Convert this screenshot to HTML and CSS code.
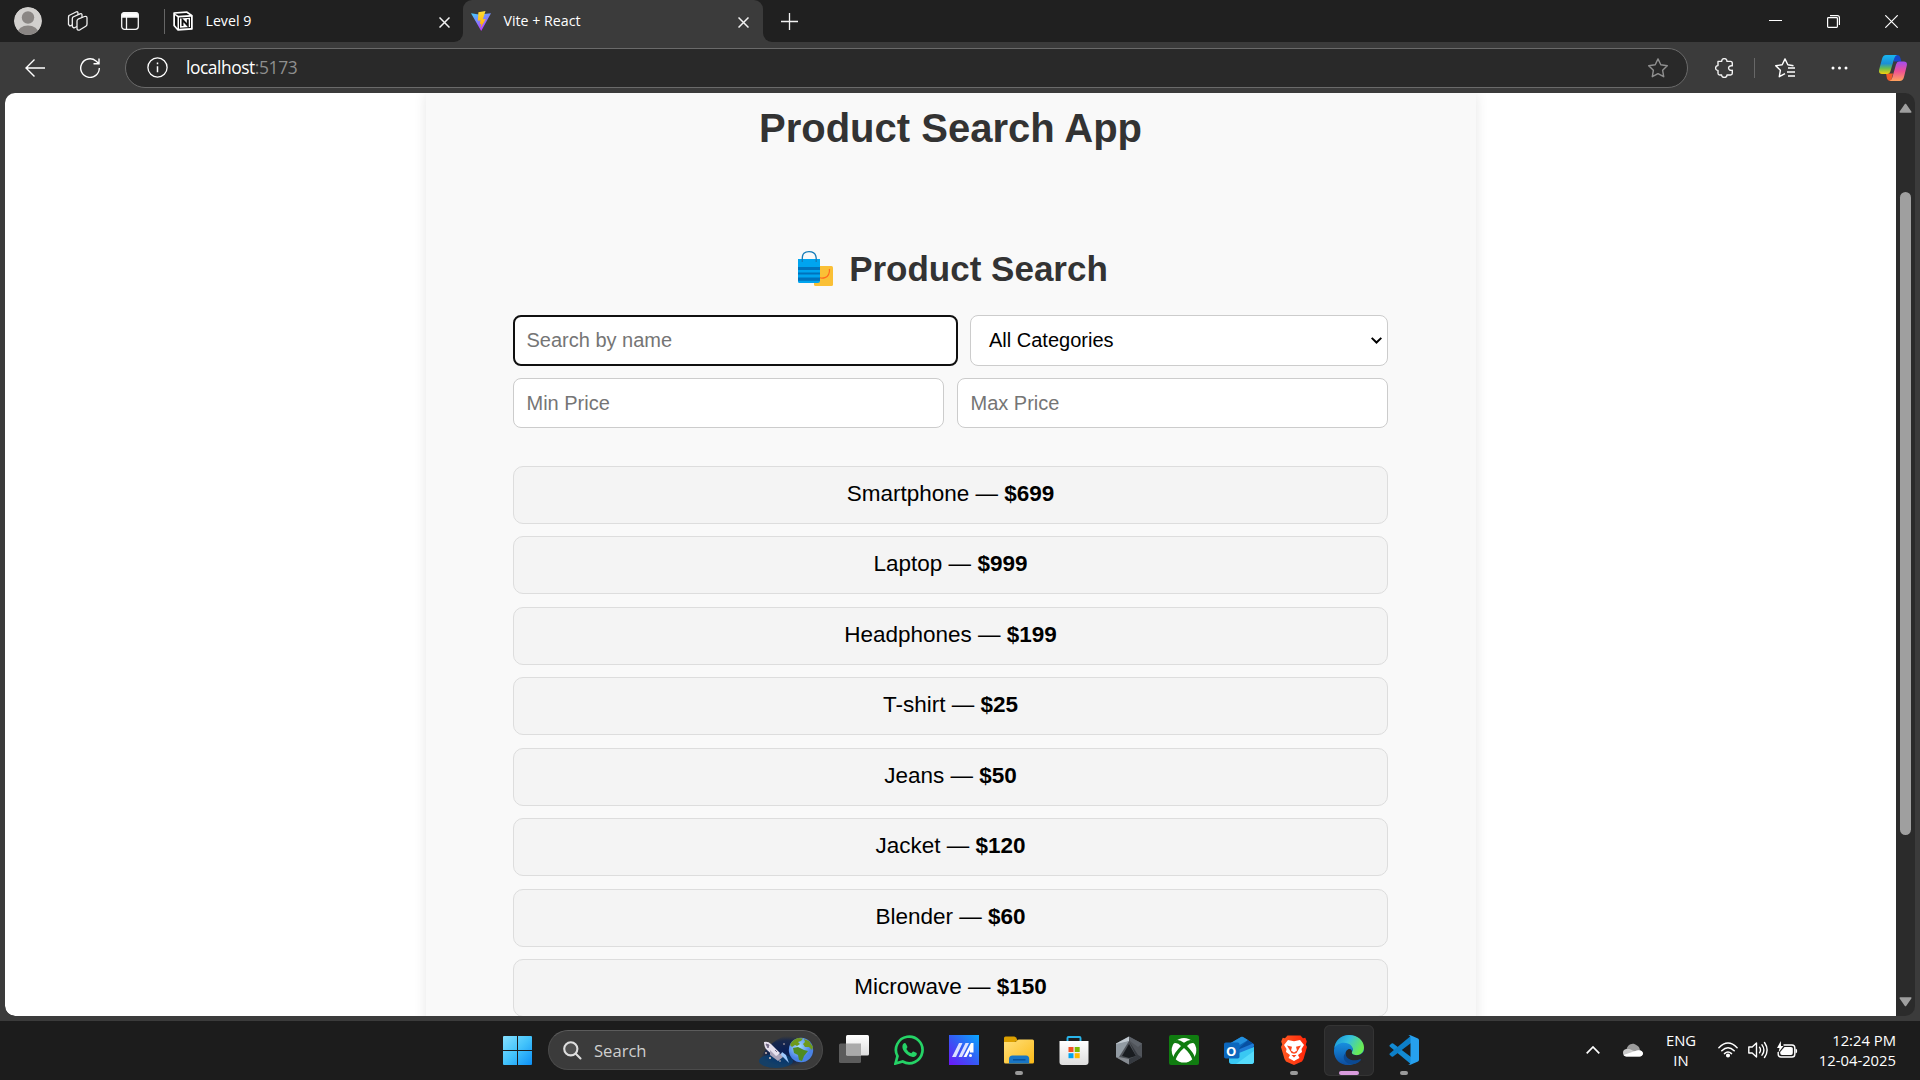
FILE: index.html
```html
<!DOCTYPE html>
<html lang="en">
<head>
<meta charset="utf-8">
<title>Vite + React</title>
<link rel="stylesheet" href="styles.css">
</head>
<body>
<div class="screen">
  <header class="tabstrip">
    <div class="strip-left">
      <svg class="avatar" width="28" height="28" viewBox="0 0 28 28"><defs><clipPath id="face"><circle cx="14" cy="14" r="14"/></clipPath></defs><g clip-path="url(#face)"><circle cx="14" cy="14" r="14" fill="#d2d0ce"/><circle cx="14" cy="10.5" r="6.2" fill="#8a8684"/><ellipse cx="14" cy="26" rx="10.5" ry="7.5" fill="#8a8684"/></g></svg>
      <svg class="workspaces" width="22" height="22" viewBox="0 0 22 22" fill="#202020" stroke="#f0f0f0" stroke-width="1.3" stroke-linejoin="round"><path d="M3 5.500l7-3.500q2-.8 2 1.200v9L4 16l-1.500-1.500v-7q0-1.300.500-2z"/><path d="M7 7l7-3.200q2-.8 2 1.200v9l-8 4-1.700-1.300V9q0-1.300.7-2z"/><path d="M12 9.200l6.500-2.700q2.500-.8 2.500 1.500v6q0 1.500-1.200 2.200L14 19.800q-3 1.200-3-1.500v-7q0-1.500 1-2.100z"/></svg>
      <svg class="tabmenu" width="18" height="18" viewBox="0 0 18 18" fill="none" stroke="#f5f5f5" stroke-width="1.300"><rect x=".7" y=".7" width="16.600" height="16.600" rx="2.800"/><path d="M5.500 5v12"/><path d="M1 3q0-2 2-2h12q2 0 2 2v2H1z" fill="#fff"/></svg>
      <span class="strip-sep"></span>
      <svg class="notion" width="20" height="20" viewBox="0 0 20 20"><path d="M1 2l13-1 5 3.500V18l-14 1-4-4.500z" fill="#fff" stroke="#fff" stroke-width="1.500" stroke-linejoin="round"/><path d="M2 2.800l11.500-.8 3 2-11 .8zM2 4.200l2.500 2v11L2 14.300zM6 6.400l12-.7v11.200l-12 .9z" fill="#111"/><path d="M7 7.400l10-.6v9.200l-10 .7z" fill="#fff"/><path d="M9.500 15V8.800l5.300 5.700V8.200" fill="none" stroke="#111" stroke-width="1.900"/></svg>
      <span class="tab-title">Level 9</span>
      <svg class="close" width="11" height="11" viewBox="0 0 11 11" stroke="#f2f2f2" stroke-width="1.500"><path d="M.5.5l10 10M10.500.5l-10 10"/></svg>
    </div>
    <div class="tab-cell"><div class="tab-active">
      <svg class="vite" width="20" height="20" viewBox="0 0 20 20"><defs><linearGradient id="va" x1="0" y1="0" x2=".5" y2="1"><stop stop-color="#41d1ff"/><stop offset="1" stop-color="#bd34fe"/></linearGradient><linearGradient id="vb" x1="0" y1="0" x2="0" y2="1"><stop stop-color="#ffdd35"/><stop offset="1" stop-color="#ffa800"/></linearGradient></defs><path d="M0 2.200l8 1.200L20 2.200 10.200 20z" fill="url(#va)"/><path d="M14.500 0L7.400 1.300 6.900 9.700l2.700-.5-.8 4 1.700-.4-1 4.400 5.200-9.300-2.800.4z" fill="url(#vb)"/></svg>
      <span class="tab-title">Vite + React</span>
      <svg class="close" width="11" height="11" viewBox="0 0 11 11" stroke="#f2f2f2" stroke-width="1.500"><path d="M.5.5l10 10M10.500.5l-10 10"/></svg>
    </div></div>
    <div class="strip-right">
      <svg class="plus" width="17" height="17" viewBox="0 0 17 17" stroke="#f2f2f2" stroke-width="1.300"><path d="M8.500 0v17M0 8.500h17"/></svg>
      <svg class="wmin" width="13" height="13" viewBox="0 0 13 13"><path d="M0 5.500h13" stroke="#fff"/></svg>
      <svg class="wmax" width="13" height="13" viewBox="0 0 13 13" fill="none" stroke="#fff" stroke-width="1.200"><rect x=".6" y="2.600" width="9.800" height="9.800" rx=".8"/><path d="M3 .6h7.400q2 0 2 2V10"/></svg>
      <svg width="13" height="13" viewBox="0 0 13 13" stroke="#fff" stroke-width="1.200"><path d="M.3.3l12.400 12.400M12.700.3L.3 12.700"/></svg>
    </div>
  </header>

  <nav class="toolbar">
    <svg class="back" width="20" height="18" viewBox="0 0 20 18" fill="none" stroke="#fff" stroke-width="1.400"><path d="M20 9H1M9.500.5L1 9l8.500 8.500"/></svg>
    <svg class="reload" width="20" height="20" viewBox="0 0 20 20" fill="none" stroke="#fff" stroke-width="1.400"><path d="M19.300 10A9.300 9.300 0 1 1 16 3l2.800 2.600M19 .5v5.300h-5.500"/></svg>
    <div class="address">
      <svg class="info" width="21" height="21" viewBox="0 0 21 21" fill="none" stroke="#fff" stroke-width="1.300"><circle cx="10.500" cy="10.500" r="9.600"/><path d="M10.500 9.300v6M10.500 5.600v1.700" stroke-width="1.500"/></svg>
      <span class="host">localhost</span><span class="port">:5173</span>
      <svg class="star" width="20" height="20" viewBox="0 0 20 20" fill="none" stroke="#8f8f8f" stroke-width="1.400" stroke-linejoin="round"><path d="M10 .9l2.800 5.900 6.500.9-4.700 4.500 1.100 6.500L10 15.600l-5.700 3.100 1.100-6.500L.7 7.700l6.500-.9z"/></svg>
    </div>
    <svg class="puzzle" width="19" height="20" viewBox="0 0 19 20" fill="none" stroke="#f2f2f2" stroke-width="1.400" stroke-linejoin="round"><path d="M3 3.400h3.600C6.600-.3 12-.3 12 3.400h3.500q1.800 0 1.800 1.800v2.700c-5-.8-5 5.200 0 4.400v3q0 1.700-1.800 1.700H12c0 3.300-5.400 3.300-5.400 0H4.800Q3 17 3 15.300v-2.900c-3.200 0-3.200-4.800 0-4.800z"/></svg>
    <span class="tool-sep"></span>
    <svg class="favs" width="20" height="20" viewBox="0 0 20 20" fill="none" stroke="#fff" stroke-width="1.400" stroke-linejoin="round"><path d="M18.500 7.700l-5.700-.9L10 .9 7.200 6.800.7 7.700l4.700 4.500-1.100 6.500L10 15.600"/><path d="M13 12.500h7M12 16.500h8M13 20.500h7" stroke-width="1.300" transform="translate(0 -2.500)"/></svg>
    <svg class="dots" width="17" height="4" viewBox="0 0 17 4" fill="#fff"><circle cx="2" cy="2" r="1.500"/><circle cx="8.500" cy="2" r="1.500"/><circle cx="15" cy="2" r="1.500"/></svg>
    <svg class="copilot" width="28" height="26" viewBox="0 0 28 26"><defs><linearGradient id="ca" x1="0" y1="0" x2="0" y2="1"><stop stop-color="#18b6f0"/><stop offset=".45" stop-color="#1b8fd6"/><stop offset=".7" stop-color="#67bd52"/><stop offset="1" stop-color="#f5d10c"/></linearGradient><linearGradient id="cb" x1="0" y1="0" x2="0" y2="1"><stop stop-color="#a14df0"/><stop offset=".5" stop-color="#ee5095"/><stop offset="1" stop-color="#ffa35c"/></linearGradient></defs><path d="M14 0h4q2.600 0 3.400 3l1 3.500H15z" fill="#1746c9"/><path d="M7 18.500h7L12 26h-1q-2.400 0-3-2.400z" fill="#f25a2b"/><path d="M7 0h11q-2 .5-2.800 3.500L11.500 16q-.8 3-3.500 3H3q-4 0-2.700-5L3 4Q4 0 7 0z" fill="url(#ca)"/><path d="M20 6.500h4.800q4 0 2.900 4.500L25 22q-1 4-4.300 4H10.500q2-.6 2.800-3.500L17 9.500q.8-3 3-3z" fill="url(#cb)"/></svg>
  </nav>

  <div class="viewport">
    <main class="page">
      <section class="card">
        <h1>Product Search App</h1>
        <div class="search">
          <h2><svg class="bags" width="35" height="35" viewBox="0 0 35 35"><rect x="16" y="15" width="19" height="20" rx="1.500" fill="#fac036"/><path d="M31.500 18c.5 11-9 9-10 8.500" fill="none" stroke="#ff6a1f" stroke-width="1.200"/><path d="M0 8h22v22q0 2-2 2H1.500Q0 32 0 30.500z" fill="#00a4ef"/><path d="M0 16h22v3H0zM0 21.500h22v2H0zM0 26.500h22v3.300H0z" fill="#0072bc"/><path d="M4.300 11V7q0-6.300 6.700-6.300T18.200 7v4" fill="none" stroke="#157cb9" stroke-width="1.300"/></svg><span>Product Search</span></h2>
          <div class="row">
            <input class="name" type="text" placeholder="Search by name">
            <div class="select" role="combobox"><span>All Categories</span><svg width="11" height="7" viewBox="0 0 11 7" fill="none" stroke="#000" stroke-width="2"><path d="M.7.900l4.800 4.600L10.300.9"/></svg></div>
          </div>
          <div class="row prices">
            <input type="text" placeholder="Min Price">
            <input type="text" placeholder="Max Price">
          </div>
          <ul class="list">
            <li>Smartphone — <strong>$699</strong></li>
            <li>Laptop — <strong>$999</strong></li>
            <li>Headphones — <strong>$199</strong></li>
            <li>T-shirt — <strong>$25</strong></li>
            <li>Jeans — <strong>$50</strong></li>
            <li>Jacket — <strong>$120</strong></li>
            <li>Blender — <strong>$60</strong></li>
            <li>Microwave — <strong>$150</strong></li>
          </ul>
        </div>
      </section>
    </main>
    <div class="scrollbar">
      <svg width="13" height="10" viewBox="0 0 13 10"><path d="M6.500 1.500L11.700 9H1.300z" fill="#9f9f9f" stroke="#9f9f9f" stroke-width="1.600" stroke-linejoin="round"/></svg>
      <span class="thumb"></span>
      <svg class="down" width="13" height="10" viewBox="0 0 13 10"><path d="M6.500 8.500L11.700 1H1.300z" fill="#9f9f9f" stroke="#9f9f9f" stroke-width="1.600" stroke-linejoin="round"/></svg>
    </div>
  </div>

  <footer class="taskbar">
    <svg class="start" width="29" height="29" viewBox="0 0 29 29"><defs><linearGradient id="wa" x1="0" y1="0" x2="1" y2="1"><stop stop-color="#86e0ff"/><stop offset=".5" stop-color="#43c3fb"/><stop offset="1" stop-color="#0c8ff5"/></linearGradient></defs><path d="M1 0h13v14H0V1q0-1 1-1zM15 0h13q1 0 1 1v13H15zM0 15h14v14H1q-1 0-1-1zM15 15h14v13q0 1-1 1H15z" fill="url(#wa)"/></svg>
    <div class="tsearch">
      <svg class="mag" width="19" height="19" viewBox="0 0 19 19" fill="#505050" stroke="#dedede" stroke-width="2.100" stroke-linecap="round"><circle cx="7.800" cy="7.800" r="6.600"/><path d="M12.800 12.800l4.700 4.700"/></svg>
      <span>Search</span>
      <svg class="space" width="60" height="38" viewBox="0 0 60 38"><defs><radialGradient id="sk"><stop stop-color="#071c55"/><stop offset=".7" stop-color="#102350" stop-opacity=".8"/><stop offset="1" stop-color="#152850" stop-opacity="0"/></radialGradient><radialGradient id="ea" cx=".4" cy=".35"><stop stop-color="#a4dbff"/><stop offset="1" stop-color="#4a83e4"/></radialGradient></defs><path d="M0 36Q4 15 26 5h31v22q-3 8-13 9z" fill="url(#sk)"/><ellipse cx="18" cy="30" rx="17" ry="7" fill="#064179" opacity=".7"/><path d="M6 11q4-1 7 2l9 9-4 5-9-8q-3-3-3-8z" fill="#e7e1ee"/><path d="M12 19l6 6 6-3 1 4-5 4-8-6z" fill="#aaa2b8"/><path d="M23 24l8 8-3-8-4-3z" fill="#9cc8fc"/><path d="M8 13l3 1-1 3zM17 19l2 2" fill="#746b86" stroke="#746b86"/><g fill="#ddc5be"><circle cx="8" cy="22" r=".9"/><circle cx="12" cy="27" r="1"/><circle cx="26" cy="13" r=".8"/><circle cx="22" cy="30" r=".8"/></g><circle cx="43" cy="19" r="12.200" fill="url(#ea)"/><path d="M32 14q2-5 8-7l5 .5-2 2.500-3 1 2 2-3 2-2-1-3 2z" fill="#6f9a1c"/><path d="M46 8l5 2 4 6-1 3-3-3-4 0-2-3 2-2z" fill="#6f9a1c"/><path d="M35 17l5-1 6 3 4 1-4 5-2 5-3-1-1-5-4-2z" fill="#4f8b22"/></svg>
    </div>
    <div class="apps">
      <span class="app"><svg viewBox="0 0 30 30"><defs><linearGradient id="tv" x1="0" y1="0" x2="0" y2="1"><stop stop-color="#fff"/><stop offset="1" stop-color="#ddd"/></linearGradient></defs><rect x="0" y="8.500" width="22" height="19.500" rx="1.500" fill="#5c5c5c"/><rect x="7" y="0" width="23" height="20.500" rx="1.500" fill="url(#tv)"/><path d="M7 8.500h15v12H8.500Q7 20.500 7 19z" fill="#aaa"/></svg></span>
      <span class="app"><svg viewBox="0 0 30 30"><path d="M1.500 28.500l2-7.300A13.300 13.300 0 1 1 8.700 26.500z" fill="none" stroke="#25d366" stroke-width="2.700"/><path d="M10 8.200q1-.6 1.800.2l1.600 3.300q.2 1-1.100 2.300 1.700 3.200 5 4.300l1.600-1.800q.8-.5 3.800 1.500.5 2.500-2.200 3.700-3.500 1.200-8-2.700T8.400 11Q8.700 9 10 8.200z" fill="#25d366"/></svg></span>
      <span class="app"><svg viewBox="0 0 30 30"><defs><linearGradient id="ms" x1="0" y1="1" x2="1" y2="0"><stop stop-color="#6d16f8"/><stop offset=".5" stop-color="#345bf4"/><stop offset="1" stop-color="#09a8fe"/></linearGradient></defs><path d="M0 0h30v30H0z" fill="url(#ms)"/><path d="M3 22L10 8h3.500L7 22zM9.500 22l7-14H20l-7 14z" fill="#dbe1ff"/><path d="M14.500 22L22 8h2.500v9.500H21V15l-3.500 7z" fill="#fff"/><circle cx="21.500" cy="20.500" r="1.500" fill="#fff"/></svg></span>
      <span class="app"><svg viewBox="0 0 30 30"><defs><linearGradient id="ex" x1="0" y1="0" x2="1" y2="1"><stop stop-color="#ffe07b"/><stop offset="1" stop-color="#fcba17"/></linearGradient></defs><path d="M0 10V3q0-1.500 1.500-1.500H10q1 0 2 1l2 3.500z" fill="#dca000"/><path d="M0 7h11.500l3-2.500h14q1.500 0 1.500 1.500v21q0 1.500-1.500 1.500h-27Q0 28.500 0 27z" fill="url(#ex)"/><path d="M5 28.500V24q0-3.500 3.500-3.500H22q3.200 0 3.200 3.500v4.500z" fill="#1976c5"/><path d="M9 24.800h12.500" stroke="#064e99" stroke-width="1.400"/></svg><i class="dot"></i></span>
      <span class="app"><svg viewBox="0 0 30 30"><defs><linearGradient id="st" x1="0" y1="0" x2="0" y2="1"><stop stop-color="#fff"/><stop offset="1" stop-color="#dedede"/></linearGradient></defs><path d="M8.500 8V3q0-1 1-1h11q1 0 1 1v5" fill="none" stroke="#29b4e9" stroke-width="1.900"/><path d="M.5 6h29v21q0 3-3 3h-23q-3 0-3-3z" fill="url(#st)"/><path d="M9.500 12h5v5h-5z" fill="#f25022"/><path d="M15.700 12h5v5h-5z" fill="#7fba00"/><path d="M9.500 18.200h5v5h-5z" fill="#00a4ef"/><path d="M15.700 18.200h5v5h-5z" fill="#ffb900"/></svg></span>
      <span class="app"><svg viewBox="0 0 30 30"><path d="M15 1.500l13 7v13.700l-13 7.300-13-7.300V8.500z" fill="#50545a"/><path d="M15 1.500l-13 7v4L15 6z" fill="#c1c9d0"/><path d="M15 1.500l13 7L24 12l-8-6z" fill="#5d6269"/><path d="M15 6L5 22l-3 .2V9z" fill="#929ba3"/><path d="M15 9l7 12-7 2-7-2z" fill="#191c20"/><path d="M5 22l10 2v5.500L2 22.200z" fill="#868b91"/><path d="M15 6l9 14 4 2.200L15 29.500V24l7-3z" fill="#363a40"/></svg></span>
      <span class="app"><svg viewBox="0 0 30 30"><rect width="30" height="30" rx="2" fill="#107c10"/><circle cx="15" cy="15.200" r="12.300" fill="#fff"/><path d="M7 5.300Q10 4 15 7.700 20 4 23 5.300L26.500 9Q22 6.500 18 11q7 7 8 12l-2.500 2Q21 18 15 13 9 18 6.500 25L4 23q1-5 8-12Q8 6.500 3.500 9z" fill="#107c10"/></svg></span>
      <span class="app outlook"><svg viewBox="0 0 30 30"><path d="M5 9L17 2q1-.4 2 0l10 6.500q1 .6 1 2V26q0 3-3 3H8q-3 0-3-3z" fill="#0c65b9"/><path d="M5 9L17 2q1-.4 2 0l5 3L9 14z" fill="#2391df"/><path d="M24 5l5 3.500L15 21l-5-3z" fill="#0750a2"/><path d="M29 8.500q1 .8 1 2L19 21l-8-5z" fill="#1e7bd6"/><path d="M5 21l10-3 15-6v14q0 3-3 3H8q-3 0-3-3z" fill="#39c8f3"/><path d="M12 29l18-13v10q0 3-3 3z" fill="#55dbfb"/><rect y="7.500" width="15.500" height="16" rx="1.800" fill="#0c67bd"/></svg><b class="oletter">O</b></span>
      <span class="app"><svg viewBox="0 0 30 30"><defs><linearGradient id="br"><stop stop-color="#ff5a22"/><stop offset="1" stop-color="#ff2408"/></linearGradient></defs><path d="M8.500.5h13L24 3.200l2.300-.4 1.500 3.700-1 3L28 12l-3.500 12-1.500 2.400L15 30l-8-3.600L5.500 24 2 12l1.200-2.500-1-3L3.700 2.800 6 3.200z" fill="url(#br)"/><path d="M9 5l6 1.300L21 5l4 5-2.500 4 .5 3-4 3 1.500 3L15 26l-5.500-3 1.500-3-4-3 .5-3L5 10z" fill="#fff"/><path d="M8 10.500l5 1.200-1 3.800 3 2 3-2-1-3.800 5-1.200-3 5-1.500 2.500-2.500.8-2.500-.8L11 15.500zM12.500 20h5L15 22.500z" fill="#fa451c"/></svg><i class="dot"></i></span>
      <span class="app current"><svg viewBox="0 0 30 30"><defs><linearGradient id="ed" x1="0" y1="0" x2="1" y2=".4"><stop stop-color="#168fd5"/><stop offset=".5" stop-color="#35c1df"/><stop offset="1" stop-color="#69eb55"/></linearGradient><linearGradient id="ee" x1="0" y1="0" x2="0" y2="1"><stop stop-color="#178fe0"/><stop offset="1" stop-color="#0d4d9f"/></linearGradient></defs><circle cx="15" cy="15" r="14.900" fill="#0e65b5"/><path d="M.3 13C1.500 5 7.500 0 15 0c9 0 15 6 15 12.500 0 5-3.500 7.700-7.500 7.700-4.200 0-5.200-2-4.500-3.200 1-1.500 1.200-3 .3-4.500C15 7 5 7 .3 13z" fill="url(#ed)"/><path d="M0 15C2 8 9 6.500 14 8.500c4 1.700 5.200 5 4 8-1.500-3-5-3-6.500.8C9 23.500 16 28 22 26.800 13 34-.5 28 0 15z" fill="url(#ee)"/><path d="M18 16.800c-.8 1.500.5 3.400 4.500 3.400 3 0 4.800-1 7.500-4v10l-2 1-1.500-2.600c-5 3-15 1.500-15-5.300 0-3 2-5.300 4-5.300 1.500 0 2.500 1.300 2.500 2.800z" fill="#29292a"/><path d="M11.500 18c0 7 9 9 15 6l.5 1c-5 6-13 5-16 1-2-3-1.500-6 .5-8z" fill="#0b4992"/></svg><i class="dot active"></i></span>
      <span class="app"><svg viewBox="0 0 30 30"><path d="M.6 10.200l2-1.800q.8-.5 1.600 0L22 22v7.200L1 11.800q-1-.8-.4-1.600z" fill="#138bd4"/><path d="M.6 19.800l2 1.800q.8.5 1.600 0L22 8V.8L1 18.200q-1 .8-.4 1.600z" fill="#0d7fc8"/><path d="M21.500.3L29 3.500q1 .5 1 1.700v19.500q0 1.200-1 1.700l-7.500 3.400q-1.500.3-2.300-.8 2.300.8 2.300-1.700V2.500q0-2-2.300-1.600.8-1 2.300-.6z" fill="#26a0ee"/></svg><i class="dot"></i></span>
    </div>
    <svg class="chev" width="14" height="8" viewBox="0 0 14 8" fill="none" stroke="#fff" stroke-width="1.700"><path d="M.7 7.300L7 1l6.300 6.300"/></svg>
    <svg class="cloud" width="20" height="14" viewBox="0 0 20 14"><path d="M3.500 7C4 2.500 9-1.500 14 2.500q2.500 1 3 5L5 11z" fill="#9b9b9b"/><path d="M3 6.500q3.500-1.600 6.500 1l9 3-1 1-14 .5z" fill="#d2d2d2"/><path d="M3.500 13.500Q0 13 0 9.800T3.200 6q1.800-.3 3.500 1.200l3.500 2L14 7.500q5-1 6 2.800-.2 3-3.500 3.200z" fill="#c9c9c9"/><path d="M3 13.500q-1.800-.3-2.500-1.600L10 8.700l4-1.300q5-.8 6 2.900-.2 3-3.500 3.200z" fill="#fff"/></svg>
    <div class="lang"><span>ENG</span><span>IN</span></div>
    <svg class="wifi" width="20" height="16" viewBox="0 0 20 16" fill="none" stroke="#fff" stroke-width="1.500" stroke-linecap="round"><path d="M.9 5.800Q10-3.600 19.100 5.800M3.800 8.800q6.200-6 12.400 0M6.500 11.600q3.500-3.300 7 0"/><circle cx="10" cy="13.500" r="1.300" fill="#fff"/></svg>
    <svg class="sound" width="20" height="18" viewBox="0 0 20 18" fill="none" stroke="#fff" stroke-width="1.400" stroke-linecap="round" stroke-linejoin="round"><path d="M.8 6h3.400l4.300-4v14l-4.300-4H.8zM11.500 6.200q2 2.800 0 5.600M14 3.800q3.800 5.200 0 10.400M16.500 1.500q5.200 7.500 0 15"/></svg>
    <svg class="battery" width="21" height="18" viewBox="0 0 21 18"><path d="M6.500 4H15q2.800 0 2.800 2.800v6.400q0 2.800-2.800 2.800H4q-2.800 0-2.800-2.800V11" fill="none" stroke="#fff" stroke-width="1.400"/><path d="M7.500 6H14q1.800 0 1.800 1.500V12q0 2-1.800 2H5q-1.800 0-1.800-2v-1z" fill="#fff"/><path d="M18.500 7.500q1.700.2 1.700 2.500t-1.700 2.500z" fill="#fff"/><path d="M3.800 0L0 7h2.500L1.500 11.500 6.500 5H4z" fill="#fff"/></svg>
    <div class="clock"><span>12:24 PM</span><span>12-04-2025</span></div>
  </footer>
</div>
</body>
</html>
```
FILE: styles.css
```css
* { box-sizing: border-box; }
body { margin: 0; background: #3b3b3b; }
svg { display: block; flex: none; }

.screen {
  width: 1920px;
  height: 1080px;
  display: flex;
  flex-direction: column;
  overflow: hidden;
  background: #3b3b3b;
  font-family: "Open Sans", "Noto Sans", sans-serif;
  color: #fff;
}

/* Tab strip */
.tabstrip { height: 42px; display: flex; }
.strip-left {
  width: 463px;
  background: #202020;
  border-bottom-right-radius: 9px;
  display: flex;
  align-items: center;
  padding: 0 13px 0 14px;
}
.workspaces { margin-left: 24px; }
.tabmenu { margin-left: 33px; }
.strip-sep { width: 1px; height: 25px; margin-left: 25px; background: #666; }
.notion { margin-left: 8px; }
.tab-title { font-size: 14.2px; line-height: 20px; margin-left: 12.5px; letter-spacing: 0; white-space: nowrap; }
.close { margin: 2px 0 0 auto; }
.tab-cell { width: 300px; background: linear-gradient(#202020 50%, #3b3b3b 50%); }
.tab-active {
  height: 42px;
  background: #3b3b3b;
  border-radius: 9px 9px 0 0;
  display: flex;
  align-items: center;
  padding: 0 14px 0 8px;
}
.strip-right {
  flex: 1;
  background: #202020;
  border-bottom-left-radius: 9px;
  display: flex;
  align-items: center;
  padding: 0 22px 0 18px;
}
.wmin { margin-left: auto; }
.wmax { margin: 0 45px; }

/* Toolbar */
.toolbar { height: 51px; display: flex; align-items: center; padding: 0 13px 0 25px; }
.reload { margin-left: 35px; }
.address {
  width: 1563px;
  height: 40px;
  margin-left: 25px;
  border: 1px solid #6a6a6a;
  border-radius: 20px;
  background: #292929;
  display: flex;
  align-items: center;
  padding: 0 19px 0 21px;
  font-size: 17.4px;
  line-height: 24px;
}
.host, .port { padding-bottom: 1px; }
.host { margin-left: 18px; letter-spacing: -0.45px; }
.port { color: #8e8e8e; letter-spacing: -0.35px; }
.star { margin-left: auto; }
.puzzle { margin-left: 27px; }
.tool-sep { width: 1px; height: 20px; background: #676767; margin-left: 20px; }
.favs { margin-left: 20px; }
.dots { margin-left: 36px; }
.copilot { margin-left: auto; }

/* Web page area */
.viewport {
  width: 1910px;
  height: 923px;
  margin-left: 5px;
  display: flex;
  border-radius: 10px;
  overflow: hidden;
  background: #2b2b2b;
}
.page {
  width: 1891px;
  background: #fff;
  display: flex;
  justify-content: center;
  overflow: hidden;
  font-family: "Liberation Sans", Arial, sans-serif;
  border-bottom-left-radius: 10px;
}
.card {
  width: 1050px;
  height: 1200px;
  background: #f9f9f9;
  box-shadow: 0 0 12px rgba(0, 0, 0, 0.1);
  color: #333;
}
h1 { margin: 12px 0 0; font-size: 40px; line-height: 46px; text-align: center; }
.search { width: 875px; margin: 98px auto 0; }
h2 {
  margin: 0;
  height: 40px;
  display: flex;
  justify-content: center;
  align-items: center;
  font-size: 35px;
  line-height: 40px;
}
.bags { margin: -2px 16px 0 5px; }
.row { display: flex; gap: 12px; margin-top: 26px; height: 51px; }
.prices { margin-top: 12px; height: 50px; gap: 13px; }
input, .select {
  flex: 1;
  min-width: 0;
  border: 1px solid #ccc;
  border-radius: 8px;
  background: #fff;
  padding: 0 12.5px;
  font: 20px "Liberation Sans", Arial, sans-serif;
}
input::placeholder { color: #757575; }
.name { flex: 0 0 445px; border: 2px solid #101010; padding: 0 12px 0 11.5px; }
.select { color: #000; display: flex; align-items: center; justify-content: space-between; padding: 0 5px 0 18px; }
.list { list-style: none; margin: 38px 0 0; padding: 0; color: #000; }
.list li {
  height: 57.9px;
  margin-bottom: 12.55px;
  border: 1px solid #ddd;
  border-radius: 10px;
  background: #f4f4f4;
  font-size: 22.5px;
  line-height: 54px;
  text-align: center;
}

/* Scrollbar */
.scrollbar { width: 19px; display: flex; flex-direction: column; align-items: center; padding: 10px 0 9px; }
.thumb { width: 11px; height: 643px; margin-top: 79px; border-radius: 6px; background: #9f9f9f; }
.down { margin-top: auto; }

/* Taskbar */
.taskbar {
  height: 59px;
  margin-top: 5px;
  background: #1c1c1c;
  display: flex;
  align-items: center;
  padding: 0 24px 1px 503px;
}
.tsearch {
  width: 275px;
  height: 40px;
  margin-left: 16px;
  border: 1px solid #4b4b4b;
  border-top-color: #5c5c5c;
  border-radius: 20px;
  background: #3b3b3b;
  display: flex;
  align-items: center;
  padding: 0 4px 0 14px;
  font-size: 16.6px;
  color: #cfcfcf;
}
.tsearch span { margin-left: 12px; }
.space { margin-left: auto; }
.apps { display: flex; margin-left: 6px; align-items: center; gap: 5px; margin-right: 157px; }
.app { position: relative; width: 50px; height: 51px; display: flex; align-items: center; justify-content: center; border-radius: 6px; }
.app svg { width: 30px; height: 30px; }
.current { background: #29292a; box-shadow: inset 0 0 0 1px #343434; }
.dot { position: absolute; bottom: 1px; left: 21px; width: 8px; height: 4px; border-radius: 2px; background: #9a9a9a; }
.dot.active { left: 15px; width: 20px; background: #d99bdd; }
.oletter { position: absolute; left: 12px; top: 18px; font-size: 13px; line-height: 16px; }
.cloud { margin-left: 23px; }
.lang, .clock { display: flex; flex-direction: column; font-size: 14.8px; line-height: 20px; white-space: nowrap; }
.lang { width: 30px; margin-left: 23px; align-items: center; }
.wifi { margin-left: 22px; }
.sound { margin-left: 10px; }
.battery { margin-left: 9px; }
.clock { margin-left: auto; align-items: flex-end; }
```
